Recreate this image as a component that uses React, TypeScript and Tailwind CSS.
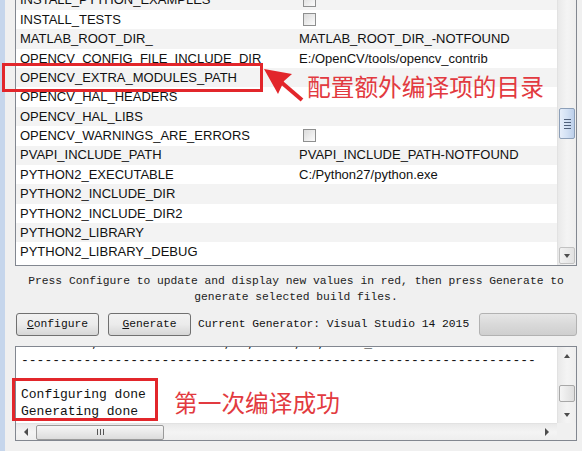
import React from "react";

const rows: [string, string][] = [
  ["INSTALL_C_EXAMPLES", "check"],
  ["INSTALL_PYTHON_EXAMPLES", "check"],
  ["INSTALL_TESTS", "check"],
  ["MATLAB_ROOT_DIR_", "MATLAB_ROOT_DIR_-NOTFOUND"],
  ["OPENCV_CONFIG_FILE_INCLUDE_DIR", "E:/OpenCV/tools/opencv_contrib"],
  ["OPENCV_EXTRA_MODULES_PATH", ""],
  ["OPENCV_HAL_HEADERS", ""],
  ["OPENCV_HAL_LIBS", ""],
  ["OPENCV_WARNINGS_ARE_ERRORS", "check"],
  ["PVAPI_INCLUDE_PATH", "PVAPI_INCLUDE_PATH-NOTFOUND"],
  ["PYTHON2_EXECUTABLE", "C:/Python27/python.exe"],
  ["PYTHON2_INCLUDE_DIR", ""],
  ["PYTHON2_INCLUDE_DIR2", ""],
  ["PYTHON2_LIBRARY", ""],
  ["PYTHON2_LIBRARY_DEBUG", ""],
];

function Checkbox() {
  return (
    <div className="w-[13px] h-[13px] border border-[#8e8f8f] bg-gradient-to-br from-[#dcdcdc] to-[#fbfbfb] p-[2px]">
      <div className="w-full h-full bg-gradient-to-br from-[#e0e0e0] to-[#f6f6f6]" />
    </div>
  );
}

function Arrow({ dir }: { dir: "up" | "down" | "left" | "right" }) {
  const pts =
    dir === "up"
      ? "1,5 4,1 7,5"
      : dir === "down"
      ? "1,1 4,5 7,1"
      : dir === "left"
      ? "5,0 1,4 5,8"
      : "1,0 5,4 1,8";
  const w = dir === "up" || dir === "down" ? 8 : 6;
  const h = dir === "up" || dir === "down" ? 6 : 8;
  return (
    <svg width={w} height={h} viewBox={`0 0 ${w} ${h}`}>
      <polygon points={pts} fill="#4d4d4d" />
    </svg>
  );
}

function VThumb({ h }: { h: string }) {
  return (
    <div
      className={`${h} mx-[1px] rounded-[2px] border border-[#8c9fb8] bg-gradient-to-r from-[#e6eefa] via-[#d3e1f4] to-[#bccfea] flex flex-col items-center justify-center gap-[2px]`}
    >
      <div className="w-[7px] h-[1px] bg-[#50607a]" />
      <div className="w-[7px] h-[1px] bg-[#50607a]" />
      <div className="w-[7px] h-[1px] bg-[#50607a]" />
      <div className="w-[7px] h-[1px] bg-[#50607a]" />
    </div>
  );
}

export default function App() {
  const mono = { fontFamily: '"Liberation Mono", "DejaVu Sans Mono", monospace' };
  return (
    <div
      className="w-[582px] h-[451px] bg-[#f0f0f0] flex overflow-hidden relative text-[#111]"
      style={{ fontFamily: '"Liberation Sans", Arial, sans-serif' }}
    >
      <div className="w-[5px] shrink-0 bg-[#c6d6ec]" />
      <div className="flex-1 pl-[10px] pr-[5px] flex flex-col">
        {/* Table */}
        <div className="-mt-[30px] h-[296px] shrink-0 border border-[#828790] bg-white flex overflow-hidden">
          <div className="flex-1 flex flex-col overflow-hidden">
            {rows.map(([name, val], i) => (
              <div
                key={name}
                className={`h-[19.4px] shrink-0 flex items-center text-[13px] ${
                  i % 2 === 1 ? "bg-[#f3f3f3]" : "bg-white"
                }`}
              >
                <div className="w-[282px] shrink-0 pl-[4px] whitespace-nowrap overflow-hidden">{name}</div>
                <div className="flex-1 pl-[1px] whitespace-nowrap overflow-hidden">
                  {val === "check" ? (
                    <div className="ml-[4px]">
                      <Checkbox />
                    </div>
                  ) : (
                    val
                  )}
                </div>
              </div>
            ))}
          </div>
          <div className="w-[19px] shrink-0 border-l border-[#e2e2e2] bg-gradient-to-r from-[#e9e9e9] via-[#f4f4f4] to-[#eeeeee] flex flex-col">
            <div className="h-[17px] shrink-0" />
            <div className="h-[120px] shrink-0" />
            <VThumb h="h-[31px] shrink-0" />
            <div className="flex-1" />
            <div className="h-[17px] shrink-0 mx-[1px] mb-[1px] rounded-[2px] border border-[#c2c2c2] bg-gradient-to-r from-[#f2f2f2] to-[#e2e2e2] flex items-center justify-center">
              <Arrow dir="down" />
            </div>
          </div>
        </div>

        {/* Info text */}
        <div className="mt-[7px] text-[11.3px] leading-[16px] text-center whitespace-pre text-[#222]" style={mono}>
          <div>Press Configure to update and display new values in red, then press Generate to</div>
          <div>generate selected build files.</div>
        </div>

        {/* Buttons */}
        <div className="mt-[8px] h-[23px] flex items-center shrink-0">
          <button
            className="ml-[1px] w-[83px] h-[23px] rounded-[3px] border border-[#707070] bg-gradient-to-b from-[#f2f2f2] via-[#ebebeb] to-[#d6d6d6] text-[11.3px] text-[#111]"
            style={mono}
          >
            <span className="underline">C</span>onfigure
          </button>
          <button
            className="ml-[9px] w-[83px] h-[23px] rounded-[3px] border border-[#707070] bg-gradient-to-b from-[#f2f2f2] via-[#ebebeb] to-[#d6d6d6] text-[11.3px] text-[#111]"
            style={mono}
          >
            <span className="underline">G</span>enerate
          </button>
          <div className="ml-[7px] text-[11.3px] whitespace-pre" style={mono}>
            Current Generator: Visual Studio 14 2015
          </div>
          <div className="ml-auto w-[98px] h-[23px] rounded-[3px] border border-[#b2b2b2] bg-gradient-to-b from-[#e6e6e6] via-[#d9d9d9] to-[#cfcfcf]" />
        </div>

        {/* Output */}
        <div className="mt-[10px] h-[95px] shrink-0 border border-[#828790] bg-white flex flex-col">
          <div className="flex-1 flex overflow-hidden">
            <div className="flex-1 overflow-hidden pl-[5px] text-[13px] leading-[17px] whitespace-pre" style={mono}>
              <div className="-mt-[12px]">
                <div>{"         ,                ,  ,     ,  ,     _"}</div>
                <div>{"------------------------------------------------------------------"}</div>
                <div>{" "}</div>
                <div>Configuring done</div>
                <div>Generating done</div>
              </div>
            </div>
            <div className="w-[19px] shrink-0 border-l border-[#e2e2e2] bg-gradient-to-r from-[#e9e9e9] via-[#f4f4f4] to-[#eeeeee] flex flex-col">
              <div className="h-[17px] shrink-0 flex items-center justify-center">
                <Arrow dir="up" />
              </div>
              <div className="h-[21px] shrink-0" />
              <div className="h-[17px] shrink-0 mx-[1px] rounded-[2px] border border-[#a8a8a8] bg-gradient-to-r from-[#f5f5f5] to-[#dedede]" />
              <div className="flex-1" />
              <div className="h-[17px] shrink-0 flex items-center justify-center">
                <Arrow dir="down" />
              </div>
            </div>
          </div>
          <div className="h-[17px] shrink-0 flex">
            <div className="flex-1 border-t border-[#e2e2e2] bg-gradient-to-b from-[#e9e9e9] via-[#f4f4f4] to-[#eeeeee] flex items-center">
              <div className="w-[20px] shrink-0 flex items-center justify-center">
                <Arrow dir="left" />
              </div>
              <div className="w-[128px] h-[15px] shrink-0 rounded-[2px] border border-[#9a9a9a] bg-gradient-to-b from-[#f6f6f6] to-[#dcdcdc] flex items-center justify-center gap-[2px]">
                <div className="w-[1px] h-[6px] bg-[#555]" />
                <div className="w-[1px] h-[6px] bg-[#555]" />
                <div className="w-[1px] h-[6px] bg-[#555]" />
              </div>
              <div className="flex-1" />
              <div className="w-[20px] shrink-0 flex items-center justify-center">
                <Arrow dir="right" />
              </div>
            </div>
            <div className="w-[19px] shrink-0 bg-[#f0f0f0]" />
          </div>
        </div>
      </div>

      {/* Annotations */}
      <div className="absolute left-[2px] top-[63px] w-[261px] h-[29px] border-[3px] border-[#e2262b]" />
      <svg className="absolute left-0 top-0" width="582" height="451">
        <line x1="302" y1="100" x2="281" y2="82" stroke="#e2262b" strokeWidth="4" />
        <polygon points="264,69 292,74 284,81 278,94" fill="#e2262b" />
      </svg>
      <div
        className="absolute left-[307px] top-[71px] text-[23.7px] leading-[30px] text-[#e23a40] whitespace-nowrap"
        style={{ fontFamily: '"Noto Sans CJK SC", sans-serif' }}
      >
        配置额外编译项的目录
      </div>
      <div className="absolute left-[12px] top-[378px] w-[146px] h-[43px] border-[3px] border-[#e2262b]" />
      <div
        className="absolute left-[174px] top-[387px] text-[23.7px] leading-[30px] text-[#e23a40] whitespace-nowrap"
        style={{ fontFamily: '"Noto Sans CJK SC", sans-serif' }}
      >
        第一次编译成功
      </div>
    </div>
  );
}
